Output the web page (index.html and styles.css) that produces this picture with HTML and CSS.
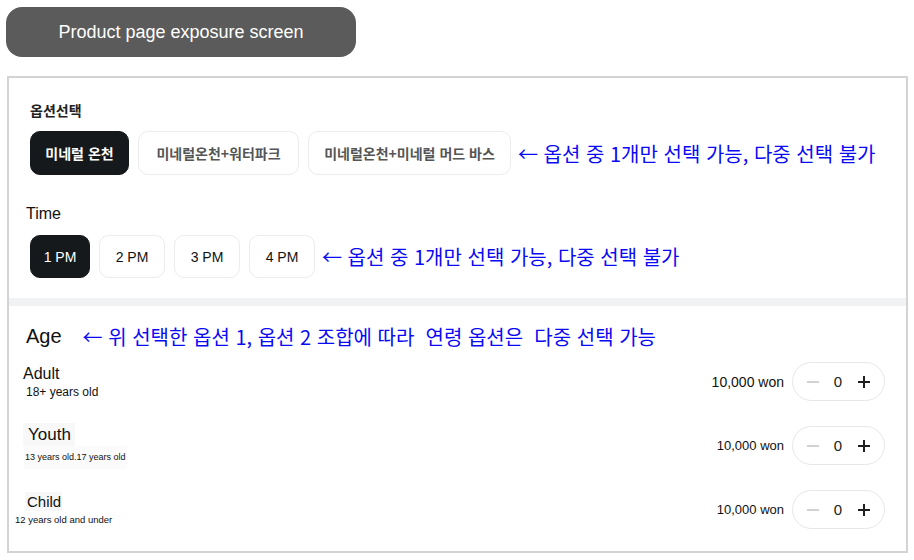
FILE: index.html
```html
<!DOCTYPE html>
<html lang="ko">
<head>
<meta charset="utf-8">
<title>Product page exposure screen</title>
<link rel="stylesheet" href="styles.css">
</head>
<body>
  <div class="banner">Product page exposure screen</div>

  <div class="frame">
    <section class="opts">
      <div class="opt-label">옵션선택</div>
      <div class="chip-row">
        <button class="chip chip-on c1">미네럴 온천</button>
        <button class="chip c2">미네럴온천+워터파크</button>
        <button class="chip c3">미네럴온천+미네럴 머드 바스</button>
        <span class="note">← 옵션 중 1개만 선택 가능, 다중 선택 불가</span>
      </div>

      <div class="time-label">Time</div>
      <div class="chip-row">
        <button class="chip time time-on">1 PM</button>
        <button class="chip time">2 PM</button>
        <button class="chip time">3 PM</button>
        <button class="chip time">4 PM</button>
        <span class="note">← 옵션 중 1개만 선택 가능, 다중 선택 불가</span>
      </div>
    </section>

    <div class="band"></div>

    <section class="ages">
      <div class="age-head">
        <span class="age-title">Age</span>
        <span class="note note-age">← 위 선택한 옵션 1, 옵션 2 조합에 따라&nbsp; 연령 옵션은&nbsp; 다중 선택 가능</span>
      </div>

      <div class="age-row">
        <div class="age-info adult">
          <div class="age-name">Adult</div>
          <div class="age-sub">18+ years old</div>
        </div>
        <div class="age-buy">
          <span class="price price-lg">10,000 won</span>
          <div class="stepper">
            <span class="minus"></span>
            <span class="qty">0</span>
            <svg class="plus" width="14" height="14" viewBox="0 0 14 14"><path d="M7 1v12M1 7h12" stroke="#1f1f1f" stroke-width="2" fill="none"/></svg>
          </div>
        </div>
      </div>

      <div class="age-row">
        <div class="age-info youth">
          <div class="age-name">Youth</div>
          <div class="age-sub">13 years old.17 years old</div>
        </div>
        <div class="age-buy">
          <span class="price">10,000 won</span>
          <div class="stepper">
            <span class="minus"></span>
            <span class="qty">0</span>
            <svg class="plus" width="14" height="14" viewBox="0 0 14 14"><path d="M7 1v12M1 7h12" stroke="#1f1f1f" stroke-width="2" fill="none"/></svg>
          </div>
        </div>
      </div>

      <div class="age-row">
        <div class="age-info child">
          <div class="age-name">Child</div>
          <div class="age-sub">12 years old and under</div>
        </div>
        <div class="age-buy">
          <span class="price">10,000 won</span>
          <div class="stepper">
            <span class="minus"></span>
            <span class="qty">0</span>
            <svg class="plus" width="14" height="14" viewBox="0 0 14 14"><path d="M7 1v12M1 7h12" stroke="#1f1f1f" stroke-width="2" fill="none"/></svg>
          </div>
        </div>
      </div>
    </section>
  </div>
</body>
</html>
```

FILE: styles.css
```css
* {
  box-sizing: border-box;
}

html, body {
  margin: 0;
  padding: 0;
  background: #ffffff;
}

body {
  font-family: "Liberation Sans", Arial, "Noto Sans CJK KR", sans-serif;
  color: #111;
  padding: 7px 0 0 6px;
}

/* top title pill */
.banner {
  width: 350px;
  height: 50px;
  border-radius: 16px;
  background: #5b5b5b;
  color: #ffffff;
  font-size: 18px;
  display: flex;
  align-items: center;
  justify-content: center;
}

/* outer screen frame */
.frame {
  width: 901px;
  margin: 19px 0 0 1px;
  border: 2px solid #d3d3d3;
  background: #fff;
}

.opts {
  height: 220px;
  padding: 22px 0 0 21px;
}

.opt-label {
  font-family: "Noto Sans CJK KR", sans-serif;
  font-size: 14px;
  font-weight: 700;
  line-height: 20px;
  color: #222;
}

.chip-row {
  display: flex;
  align-items: center;
  gap: 9px;
  margin-top: 11px;
}

.chip {
  height: 44px;
  border: 1px solid #ececec;
  border-radius: 10px;
  background: #fff;
  font-family: "Noto Sans CJK KR", sans-serif;
  font-size: 14px;
  font-weight: 600;
  color: #555;
  padding: 0;
  margin: 0;
  white-space: nowrap;
  flex: none;
  display: flex;
  align-items: center;
  justify-content: center;
}

.chip-on {
  background: #16191c;
  border-color: #16191c;
  color: #fff;
  font-weight: 700;
}

.c1 { width: 99px; }
.c2 { width: 161px; }
.c3 { width: 203px; }

.time {
  width: 66px;
  height: 43px;
  font-family: "Liberation Sans", Arial, sans-serif;
  font-weight: 400;
  font-size: 14px;
  color: #111;
}

.time-on {
  width: 60px;
  background: #16191c;
  border-color: #16191c;
  color: #fff;
  font-weight: 400;
}

.time-label {
  font-size: 16px;
  line-height: 22px;
  margin: 28px 0 0 -4px;
}

.time-label + .chip-row {
  margin-top: 10px;
}

.note {
  font-family: "Noto Sans CJK KR", sans-serif;
  font-size: 20px;
  font-weight: 400;
  color: #0a0af5;
  white-space: nowrap;
  margin-left: -2px;
}

.band {
  height: 8px;
  background: #f1f2f4;
}

/* age pickers */
.ages {
  height: 245px;
  padding: 18px 21px 0 0;
}

.age-head {
  display: flex;
  align-items: center;
  height: 24px;
  padding-left: 17px;
  gap: 21px;
}

.age-title {
  font-size: 20px;
}

.note-age {
  margin-left: 0;
}

.age-row {
  display: flex;
  align-items: center;
  justify-content: space-between;
  height: 39px;
  margin-top: 25px;
}

.ages .age-head + .age-row {
  margin-top: 14px;
}

.age-info {
  display: flex;
  flex-direction: column;
  align-items: flex-start;
}

.adult {
  padding-left: 14px;
}

.adult .age-name {
  font-size: 16px;
  line-height: 19px;
}

.adult .age-sub {
  font-size: 12px;
  line-height: 14px;
  margin-top: 2px;
  padding-left: 3px;
}

.youth {
  padding-left: 14px;
}

.youth .age-name {
  font-size: 17px;
  line-height: 23px;
  width: 52px;
  padding-left: 5px;
  background: #f8f8f8;
}

.youth .age-sub {
  font-size: 9px;
  line-height: 23px;
  padding: 0 1px;
  margin-left: 1px;
  background: #fbfbfb;
}

.child {
  padding-left: 6px;
}

.child .age-name {
  font-size: 15px;
  line-height: 19px;
  width: 37px;
  margin-left: 10px;
  padding-left: 2px;
  background: #f7f7f7;
}

.child .age-sub {
  font-size: 9.5px;
  line-height: 17px;
}

.age-buy {
  display: flex;
  align-items: center;
  gap: 8px;
}

.price {
  font-size: 13px;
  color: #111;
}

.price-lg {
  font-size: 14px;
}

.stepper {
  width: 93px;
  height: 39px;
  border: 1px solid #e7e7e7;
  border-radius: 20px;
  display: flex;
  align-items: center;
  justify-content: space-between;
  padding: 0 13px 0 14px;
}

.minus {
  width: 12px;
  height: 2px;
  background: #d2d2d2;
}

.qty {
  font-size: 15px;
  color: #222;
}

.plus {
  display: block;
}
```
